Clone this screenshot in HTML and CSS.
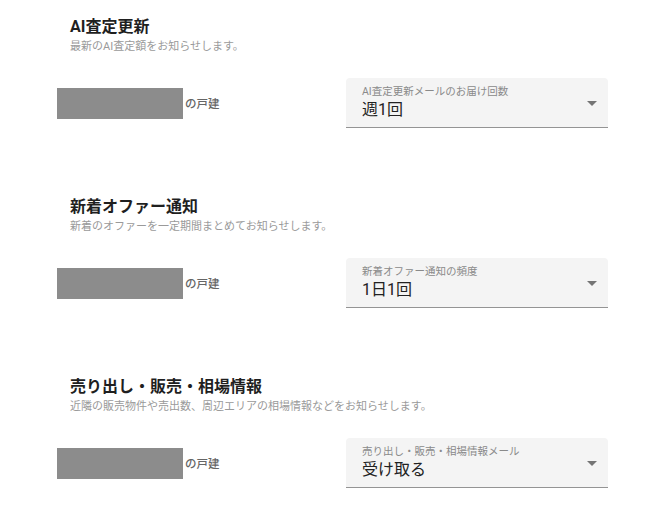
FILE: index.html
```html
<!DOCTYPE html>
<html lang="ja">
<head>
<meta charset="utf-8">
<link rel="stylesheet" href="styles.css">
</head>
<body>
<main class="page">
  <section class="setting">
    <h2 class="setting-title">AI査定更新</h2>
    <p class="setting-desc">最新のAI査定額をお知らせします。</p>
    <div class="setting-row">
      <div class="property"><span class="redacted"></span><span class="property-type">の戸建</span></div>
      <div class="select">
        <div class="select-text">
          <span class="select-label">AI査定更新メールのお届け回数</span>
          <span class="select-value">週1回</span>
        </div>
        <svg class="select-arrow" viewBox="0 0 24 24" width="24" height="24"><path d="M7 10l5 5 5-5z" fill="#757575"/></svg>
      </div>
    </div>
  </section>
  <section class="setting">
    <h2 class="setting-title">新着オファー通知</h2>
    <p class="setting-desc">新着のオファーを一定期間まとめてお知らせします。</p>
    <div class="setting-row">
      <div class="property"><span class="redacted"></span><span class="property-type">の戸建</span></div>
      <div class="select">
        <div class="select-text">
          <span class="select-label">新着オファー通知の頻度</span>
          <span class="select-value">1日1回</span>
        </div>
        <svg class="select-arrow" viewBox="0 0 24 24" width="24" height="24"><path d="M7 10l5 5 5-5z" fill="#757575"/></svg>
      </div>
    </div>
  </section>
  <section class="setting">
    <h2 class="setting-title">売り出し・販売・相場情報</h2>
    <p class="setting-desc">近隣の販売物件や売出数、周辺エリアの相場情報などをお知らせします。</p>
    <div class="setting-row">
      <div class="property"><span class="redacted"></span><span class="property-type">の戸建</span></div>
      <div class="select">
        <div class="select-text">
          <span class="select-label">売り出し・販売・相場情報メール</span>
          <span class="select-value">受け取る</span>
        </div>
        <svg class="select-arrow" viewBox="0 0 24 24" width="24" height="24"><path d="M7 10l5 5 5-5z" fill="#757575"/></svg>
      </div>
    </div>
  </section>
</main>
</body>
</html>
```

FILE: styles.css
```css
* { box-sizing: border-box; }
html, body { margin: 0; padding: 0; background: #fff; }
body {
  font-family: Roboto, "Noto Sans CJK JP", sans-serif;
  color: #222;
}
.page {
  padding: 15px 48px 0 57px;
  display: flex;
  flex-direction: column;
  gap: 67px;
}
.setting-title {
  margin: 0 0 0 13px;
  font-size: 16px;
  line-height: 24px;
  font-weight: 700;
  color: #1f1f1f;
}
.setting-desc {
  margin: 0 0 0 13px;
  font-size: 11px;
  line-height: 16px;
  color: #9a9a9a;
}
.setting-row {
  margin-top: 23px;
  display: grid;
  grid-template-columns: 1fr 262px;
  align-items: center;
}
.property {
  display: flex;
  align-items: center;
  gap: 2px;
}
.redacted {
  display: block;
  width: 126px;
  height: 31px;
  background: #8c8c8c;
}
.property-type {
  font-size: 11.5px;
  color: #666;
  font-weight: 500;
}
.select {
  height: 50px;
  background: #f4f4f4;
  border-radius: 4px 4px 0 0;
  border-bottom: 1px solid #949494;
  display: flex;
  align-items: center;
  padding: 0 4px 0 16px;
}
.select-text {
  flex: 1;
  display: flex;
  flex-direction: column;
  padding-top: 1px;
}
.select-label {
  font-size: 10.5px;
  line-height: 14px;
  color: #8a8a8a;
}
.select-value {
  font-size: 16px;
  line-height: 22px;
  color: #222;
}
.select-arrow { display: block; flex: none; }
```
